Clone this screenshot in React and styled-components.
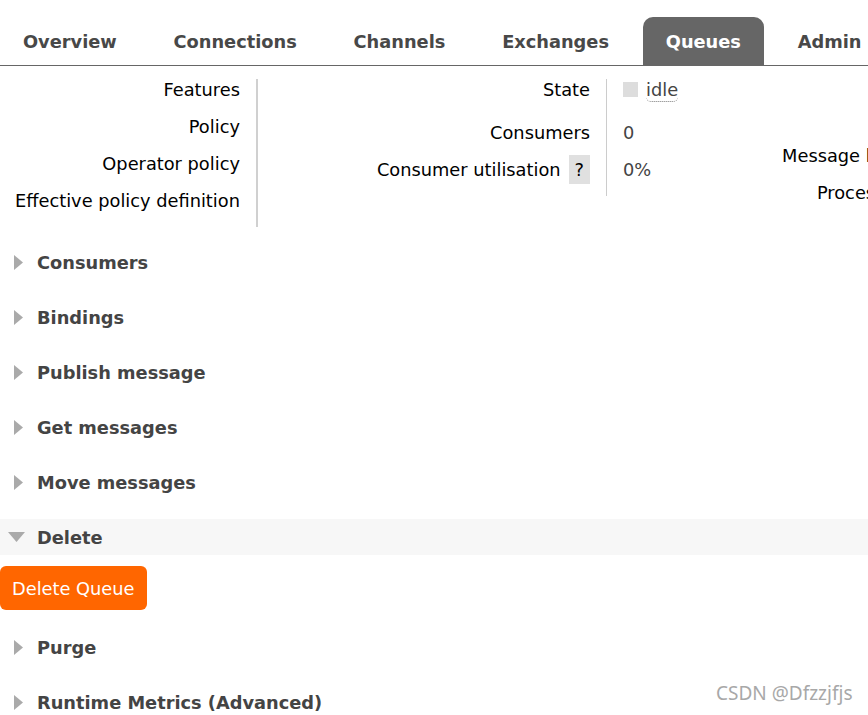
import React from "react";
import styled, { createGlobalStyle } from "styled-components";

const Global = createGlobalStyle`
  html, body { margin: 0; padding: 0; background: #fff; overflow: hidden; }
  body { font-family: "DejaVu Sans", Verdana, sans-serif; font-size: 17.8px; color: #000; }
`;

const Page = styled.div`
  position: relative;
  width: 868px;
  height: 715px;
  overflow: hidden;
`;

const TabBar = styled.ul`
  list-style: none;
  margin: 0;
  padding: 17px 0 0 0;
  display: flex;
  gap: 10.8px;
  border-bottom: 1px solid #666;
  white-space: nowrap;
`;

const Tab = styled.li`
  height: 48px;
  padding: 1px 23px 0;
  box-sizing: border-box;
  display: flex;
  align-items: center;
  font-weight: bold;
  color: ${(p) => (p.$active ? "#fff" : "#484848")};
  background: ${(p) => (p.$active ? "#666" : "transparent")};
  border-radius: 10px 10px 0 0;
  flex-shrink: 0;
`;

const Details = styled.div`
  display: flex;
  align-items: flex-start;
  margin-top: 13px;
  white-space: nowrap;
`;

const InfoTable = styled.table`
  border-collapse: collapse;
  border-spacing: 0;
  flex-shrink: 0;
  margin-left: ${(p) => p.$ml || 0}px;
`;

const Th = styled.th`
  text-align: right;
  font-weight: normal;
  line-height: 21px;
  vertical-align: top;
  padding: 0 16px ${(p) => p.$pb ?? 16}px 15px;
  border-right: ${(p) => p.$line || "none"};
  height: ${(p) => (p.$h ? `${p.$h}px` : "auto")};
  box-sizing: border-box;
`;

const Td = styled.td`
  line-height: 21px;
  vertical-align: top;
  padding: 0 16px ${(p) => p.$pb ?? 16}px 16px;
  color: #444;
`;

const Help = styled.span`
  display: inline;
  background: #e0e0e0;
  padding: 4px 6px;
  margin-left: 8px;
  color: #000;
`;

const StateBox = styled.span`
  display: inline-block;
  width: 15px;
  height: 15px;
  background: #ddd;
  vertical-align: -1px;
  margin-right: 8px;
`;

const StateText = styled.span`
  border-bottom: 1px dotted #777;
  border-radius: 5px;
  padding-bottom: 1px;
  color: #444;
`;

const Sections = styled.div`
  margin-top: 17px;
  display: flex;
  flex-direction: column;
  gap: 19px;
`;

const SectionHeader = styled.div`
  height: 36px;
  display: flex;
  align-items: center;
  background: ${(p) => (p.$open ? "#f7f7f7" : "transparent")};
  font-weight: bold;
  color: #444;
`;

const Arrow = styled.span`
  width: 37px;
  display: flex;
  align-items: center;
  padding-left: ${(p) => (p.$open ? 8 : 14)}px;
  box-sizing: border-box;
`;

const SectionBody = styled.div`
  padding-top: 11px;
`;

const DangerButton = styled.button`
  font-family: inherit;
  font-size: 17.8px;
  color: #fff;
  background: #ff6600;
  border: none;
  border-radius: 6px;
  height: 44px;
  padding: 0 12px;
  cursor: pointer;
`;

const Watermark = styled.div`
  position: absolute;
  left: 716px;
  top: 680px;
  font-family: "Noto Sans", "Noto Sans CJK SC", sans-serif;
  font-size: 19px;
  color: #a8a8a8;
  white-space: nowrap;
`;

const RightTri = () => (
  <svg width="10" height="15" viewBox="0 0 10 15">
    <polygon points="0,0 9,7.5 0,15" fill="#aaa" />
  </svg>
);

const DownTri = () => (
  <svg width="17" height="10" viewBox="0 0 17 10">
    <polygon points="0,0 17,0 8.5,10" fill="#aaa" />
  </svg>
);

const tabs = ["Overview", "Connections", "Channels", "Exchanges", "Queues", "Admin"];
const sections = [
  "Consumers",
  "Bindings",
  "Publish message",
  "Get messages",
  "Move messages",
  "Delete",
  "Purge",
  "Runtime Metrics (Advanced)",
];

export default function App() {
  const line1 = "2px solid #d0d0d0";
  const line2 = "1px solid #ccc";
  return (
    <Page>
      <Global />
      <TabBar>
        {tabs.map((t) => (
          <Tab key={t} $active={t === "Queues"}>
            {t}
          </Tab>
        ))}
      </TabBar>
      <Details>
        <InfoTable>
          <tbody>
            {["Features", "Policy", "Operator policy", "Effective policy definition"].map((l) => (
              <tr key={l}>
                <Th $line={line1}>{l}</Th>
                <Td></Td>
              </tr>
            ))}
          </tbody>
        </InfoTable>
        <InfoTable $ml={72}>
          <tbody>
            <tr>
              <Th $line={line2} $pb={22}>State</Th>
              <Td $pb={22}>
                <StateBox />
                <StateText>idle</StateText>
              </Td>
            </tr>
            <tr>
              <Th $line={line2}>Consumers</Th>
              <Td>0</Td>
            </tr>
            <tr>
              <Th $line={line2}>
                Consumer utilisation<Help>?</Help>
              </Th>
              <Td>0%</Td>
            </tr>
          </tbody>
        </InfoTable>
        <InfoTable $ml={73}>
          <tbody>
            <tr>
              <Th $h={29} $pb={0}></Th>
              <Td $pb={0}>Total</Td>
            </tr>
            <tr>
              <Th>
                Messages<Help>?</Help>
              </Th>
              <Td>0</Td>
            </tr>
            <tr>
              <Th>
                Message body bytes<Help>?</Help>
              </Th>
              <Td>0 B</Td>
            </tr>
            <tr>
              <Th>
                Process memory<Help>?</Help>
              </Th>
              <Td>34 KiB</Td>
            </tr>
          </tbody>
        </InfoTable>
      </Details>
      <Sections>
        {sections.map((s) => {
          const open = s === "Delete";
          return (
            <div key={s}>
              <SectionHeader $open={open}>
                <Arrow $open={open}>{open ? <DownTri /> : <RightTri />}</Arrow>
                {s}
              </SectionHeader>
              {open && (
                <SectionBody>
                  <DangerButton>Delete Queue</DangerButton>
                </SectionBody>
              )}
            </div>
          );
        })}
      </Sections>
      <Watermark>CSDN @Dfzzjfjs</Watermark>
    </Page>
  );
}
